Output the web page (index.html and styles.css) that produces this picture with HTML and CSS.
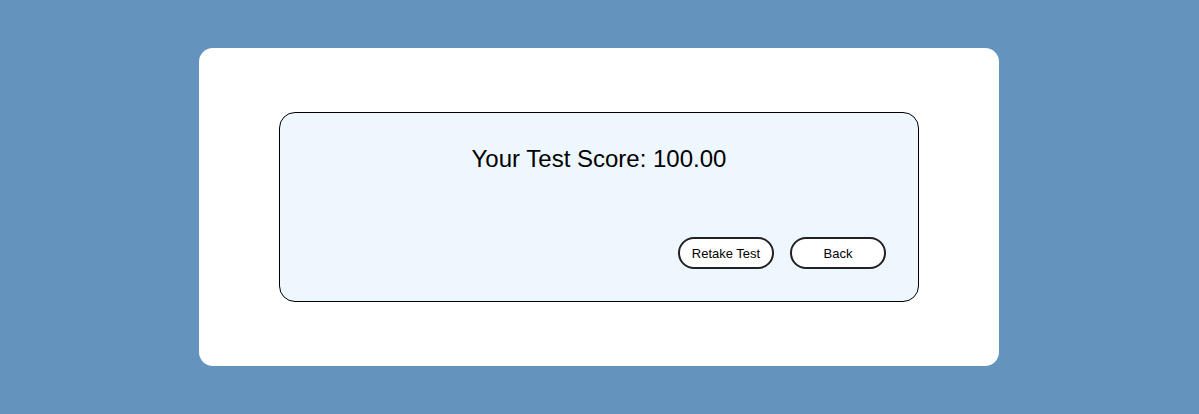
FILE: index.html
```html
<!DOCTYPE html>
<html lang="en">
<head>
<meta charset="utf-8">
<title>Test Score</title>
<link rel="stylesheet" href="styles.css">
</head>
<body>
<main class="card">
  <section class="result">
    <h2 class="score">Your Test Score: 100.00</h2>
    <div class="actions">
      <button class="btn" type="button">Retake Test</button>
      <button class="btn" type="button">Back</button>
    </div>
  </section>
</main>
</body>
</html>
```
FILE: styles.css
```css
html, body {
  margin: 0;
  padding: 0;
}
body {
  background: #6493bd;
  font-family: "Liberation Sans", Arial, Helvetica, sans-serif;
  min-height: 414px;
  padding-top: 48px;
  box-sizing: border-box;
}
.card {
  width: 800px;
  box-sizing: border-box;
  margin: 0 auto;
  margin-left: 199px;
  background: #ffffff;
  border-radius: 14px;
  padding: 64px 80px;
}
.result {
  box-sizing: border-box;
  width: 640px;
  border: 1px solid #000;
  border-radius: 16px;
  background: #eef6fe;
  padding: 32px 32px;
  display: flex;
  flex-direction: column;
  gap: 64px;
}
.score {
  margin: 0;
  font-size: 24px;
  font-weight: 400;
  line-height: 28px;
  text-align: center;
  color: #000;
}
.actions {
  display: flex;
  justify-content: flex-end;
  gap: 16px;
}
.btn {
  width: 96px;
  height: 32px;
  box-sizing: border-box;
  border: 2px solid #222;
  border-radius: 16px;
  background: #fff;
  font-family: "Liberation Sans", Arial, Helvetica, sans-serif;
  font-size: 13px;
  color: #000;
  padding: 0;
  cursor: pointer;
}
```
